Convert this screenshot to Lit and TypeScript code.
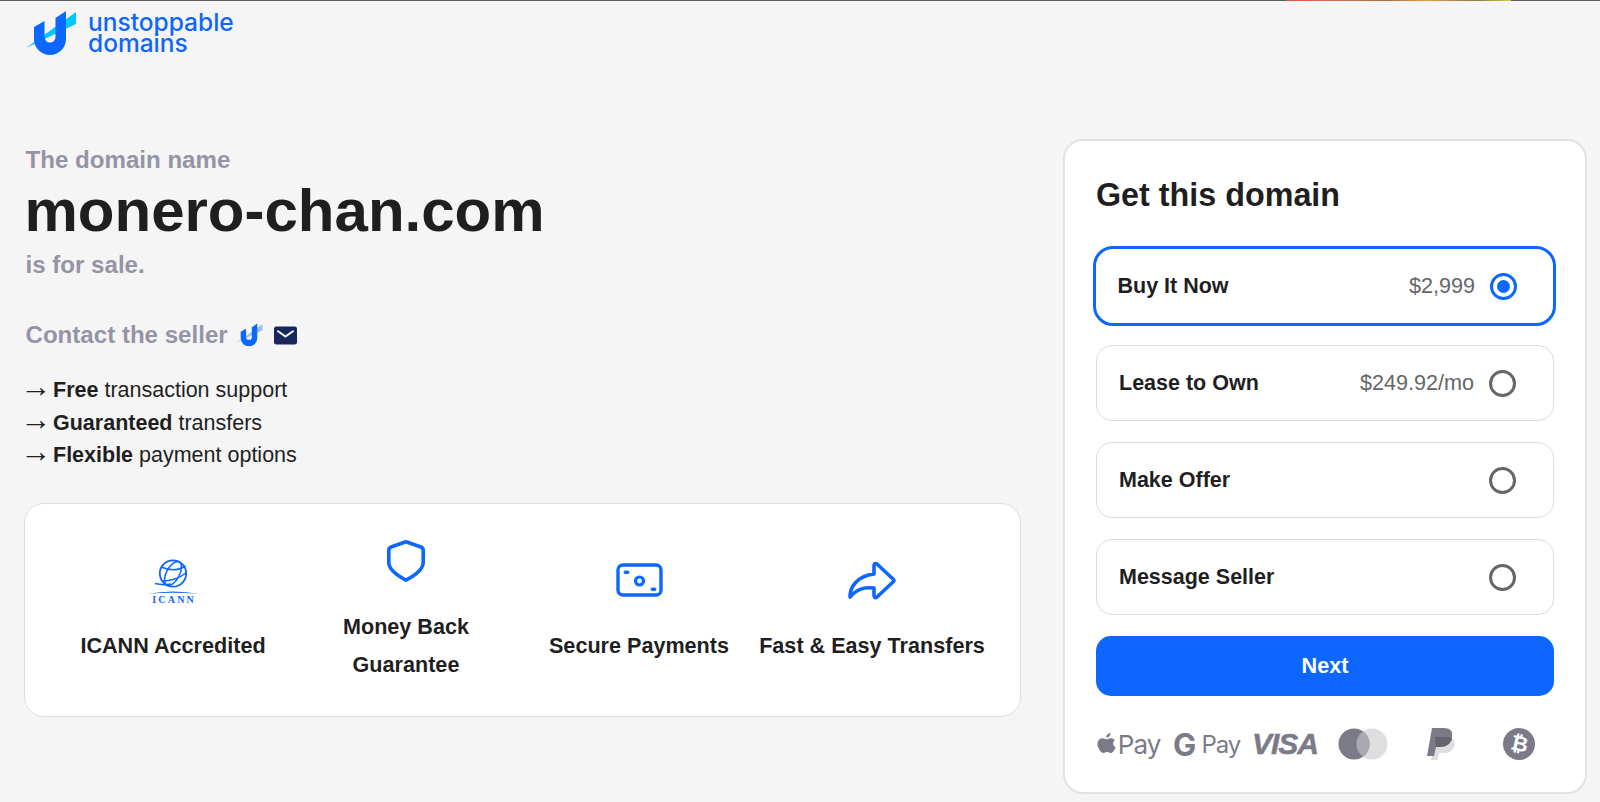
import {LitElement, html, css, svg} from 'lit';
import {customElement} from 'lit/decorators.js';

const logoMark = (width: number, streak: string) => html`
  <svg class="mark" width=${width} height=${(width * 46) / 52} viewBox="25 10 52 46">
    <path d="M26 48 L76 12 V24 Z" fill=${streak}></path>
    <path d="M34 27 L44.500 21 V37 A5.500 5.500 0 0 0 55.500 37 V18 L66 11 V39 A16 16 0 0 1 34 39 Z" fill="#0d67fe"></path>
  </svg>
`;

const shield = svg`<path d="M21 3.800 L36 9 Q38.200 10 38.200 12.500 V24.500 Q38.200 33 21 42.200 Q3.800 33 3.800 24.500 V12.500 Q3.800 10 6 9 Z" fill="none" stroke="#0d67fe" stroke-width="3.600" stroke-linejoin="round"></path>`;

const money = svg`
  <rect x="2" y="2" width="43" height="30" rx="5" fill="none" stroke="#0d67fe" stroke-width="3.400"></rect>
  <circle cx="23.500" cy="18" r="4" fill="none" stroke="#0d67fe" stroke-width="3.200"></circle>
  <rect x="8" y="8" width="5" height="2.600" rx="1.300" fill="#0d67fe" stroke="#0d67fe"></rect>
  <rect x="35" y="25" width="5" height="2.600" rx="1.300" fill="#0d67fe" stroke="#0d67fe"></rect>
`;

const share = svg`<path d="M2 36 C2 26 9 15 26 13 V5 Q26 1.500 29 3 L45 18 Q47 19.500 45 21 L29 36 Q26 38 26 34 V27 C16 26 9 28 2 36 Z" fill="none" stroke="#0d67fe" stroke-width="3.600" stroke-linejoin="round"></path>`;

const options = [
  {label: 'Buy It Now', price: '$2,999', selected: true},
  {label: 'Lease to Own', price: '$249.92/mo', selected: false},
  {label: 'Make Offer', price: '', selected: false},
  {label: 'Message Seller', price: '', selected: false},
];

const perks = [
  ['Free', 'transaction support'],
  ['Guaranteed', 'transfers'],
  ['Flexible', 'payment options'],
];

@customElement('app-root')
export class AppRoot extends LitElement {
  static override styles = css`
    :host {
      display: block;
      height: 802px;
      overflow: hidden;
      background: #f5f5f5;
      font-family: "Liberation Sans", Arial, sans-serif;
      color: #1f1f1f;
    }
    .page {
      position: relative;
      box-sizing: border-box;
      height: 802px;
      border-top: 1px solid #5c5c5c;
      padding: 0 13px 0 24px;
    }
    .stripe {
      position: absolute;
      top: -1px;
      left: 1286px;
      width: 225px;
      height: 1px;
      background: linear-gradient(90deg, #d8564a, #c9705a 25%, #a86b3c 45%, #e89a4a 62%, #8a7a4a 85%, #d8c850);
    }
    .brand {
      display: flex;
      align-items: center;
      gap: 11px;
      height: 46px;
      margin: 9px 0 0 1px;
    }
    .brand-name {
      font-family: Inter, sans-serif;
      font-size: 24.500px;
      font-weight: 500;
      line-height: 21px;
      color: #0d67fe;
    }
    .main {
      display: grid;
      grid-template-columns: 997px 524px;
      column-gap: 42px;
      margin-top: 83px;
    }
    .intro { padding: 7px 0 0 1.500px; }
    .muted {
      font-size: 24.100px;
      font-weight: 700;
      color: #9594a5;
      line-height: 28px;
    }
    .domain {
      margin: 1px 0 4px -1px;
      font-size: 60px;
      line-height: 72px;
      font-weight: 700;
      color: #1f1f1f;
    }
    .contact {
      display: flex;
      align-items: center;
      margin-top: 42px;
      height: 28px;
    }
    .contact .mark { margin: 0 11px 0 8px; }
    .perks {
      margin-top: 25px;
      font-size: 21.500px;
      line-height: 32.500px;
    }
    .arrow {
      display: inline-block;
      width: 32.500px;
      margin-left: -5px;
      font-size: 31px;
      line-height: 0;
    }
    .features {
      box-sizing: border-box;
      display: grid;
      grid-template-columns: repeat(4, 233px);
      justify-content: center;
      align-items: center;
      height: 214px;
      padding-top: 2px;
      margin-top: 31px;
      background: #fff;
      border: 1px solid #dedede;
      border-radius: 20px;
    }
    .feature {
      display: flex;
      flex-direction: column;
      align-items: center;
      text-align: center;
      font-size: 21.600px;
      font-weight: 700;
      line-height: 38px;
    }
    .feature .art {
      display: flex;
      align-items: center;
      justify-content: center;
      height: 48px;
      margin-bottom: 23px;
    }
    .feature.tall .art { margin-bottom: 23px; }
    .icann {
      display: flex;
      flex-direction: column;
      align-items: center;
      width: 52px;
      height: 48px;
    }
    .icann-word {
      font-family: "Liberation Serif", serif;
      font-size: 10px;
      font-weight: 700;
      letter-spacing: 2.200px;
      margin-right: -2.200px;
      line-height: 9px;
      color: #0d67fe;
    }
    .buy {
      box-sizing: border-box;
      height: 655px;
      padding: 0 31px;
      background: #fff;
      border: 2px solid #e2e2e2;
      border-radius: 20px;
    }
    .buy h2 {
      margin: 32px 0 31px;
      font-size: 32.300px;
      line-height: 44px;
      font-weight: 700;
      color: #1f1f1f;
    }
    .choices {
      display: flex;
      flex-direction: column;
      gap: 21px;
    }
    .choice {
      box-sizing: border-box;
      display: flex;
      align-items: center;
      height: 76px;
      padding: 0 37px 0 22px;
      border: 1px solid #dcdcdc;
      border-radius: 16px;
      font-size: 21.500px;
      font-weight: 700;
    }
    .choice.on {
      height: 80px;
      margin: -2px -2px -2px -3px;
      padding: 0 36px 0 21.500px;
      border: 3px solid #0d67fe;
      border-radius: 20px;
    }
    .price {
      margin-left: auto;
      margin-right: 15px;
      font-size: 21.600px;
      font-weight: 400;
      color: #666;
    }
    .radio {
      box-sizing: border-box;
      display: flex;
      align-items: center;
      justify-content: center;
      flex: none;
      width: 27px;
      height: 27px;
      margin-left: auto;
      border: 3px solid #666;
      border-radius: 50%;
    }
    .price + .radio { margin-left: 0; }
    .on .radio { border-color: #0d67fe; }
    .on .radio::after {
      content: "";
      width: 13px;
      height: 13px;
      border-radius: 50%;
      background: #0d67fe;
    }
    .next {
      display: block;
      width: 100%;
      height: 60px;
      margin-top: 21px;
      border: 0;
      border-radius: 15px;
      background: #0d67fe;
      color: #fff;
      font: 700 21.600px "Liberation Sans", Arial, sans-serif;
    }
    .pay {
      display: grid;
      grid-template-columns: repeat(6, 78.200px);
      justify-content: center;
      justify-items: center;
      align-items: center;
      height: 46px;
      margin: 25px -1px 0 -3px;
      color: #7b7b88;
    }
    .wallet {
      display: flex;
      align-items: center;
      gap: 2px;
      font-family: Inter, sans-serif;
      font-size: 26px;
      letter-spacing: -1px;
      white-space: nowrap;
    }
    .wallet.google { font-size: 24px; gap: 5px; }
    .g {
      font-weight: 700;
      font-size: 31px;
      letter-spacing: 0;
    }
    .visa {
      font-size: 30px;
      font-weight: 700;
      font-style: italic;
      letter-spacing: -1px;
      -webkit-text-stroke: 0.500px #7b7b88;
    }
    .coin {
      display: flex;
      align-items: center;
      justify-content: center;
      width: 32px;
      height: 32px;
      border-radius: 50%;
      background: #7b7b88;
      color: #fff;
      font-family: "DejaVu Sans", sans-serif;
      font-size: 21px;
      font-weight: 700;
    }
    .coin span { transform: rotate(12deg); }
  `;

  override render() {
    return html`
      <div class="page">
        <div class="stripe"></div>
        <header class="brand">
          ${logoMark(52, '#00c9ff')}
          <div class="brand-name">unstoppable<br />domains</div>
        </header>
        <div class="main">
          <section>
            <div class="intro">
              <div class="muted">The domain name</div>
              <div class="domain">monero-chan.com</div>
              <div class="muted">is for sale.</div>
              <div class="muted contact">
                Contact the seller ${logoMark(27, '#9cc0f5')}
                <svg width="23" height="19" viewBox="0 0 24 19">
                  <rect width="24" height="19" rx="2.500" fill="#17275c"></rect>
                  <path d="M3.500 4.500 L12 10.500 L20.500 4.500" fill="none" stroke="#fff" stroke-width="2"></path>
                </svg>
              </div>
              <div class="perks">
                ${perks.map(
                  ([strong, rest]) => html`<div><span class="arrow">→</span><b>${strong}</b> ${rest}</div>`
                )}
              </div>
            </div>
            <div class="features">
              <div class="feature">
                <div class="art">
                  <div class="icann">
                    <svg width="52" height="39" viewBox="0 0 52 39">
                      <g fill="none" stroke="#0d67fe">
                        <circle cx="26" cy="17.500" r="13.200" stroke-width="1.800"></circle>
                        <ellipse cx="26" cy="17.500" rx="6.500" ry="13.200" transform="rotate(28 26 17.500)" stroke-width="1.500"></ellipse>
                        <path d="M14.500 11 Q27 17 38.500 10 M15 25 Q29 25 39.500 16.500 M8 27.500 Q16 29.500 24 28" stroke-width="1.500"></path>
                      </g>
                      <path d="M0 38 Q26 33 52 38 Q26 35.500 0 38 Z" fill="#0d67fe"></path>
                    </svg>
                    <div class="icann-word">ICANN</div>
                  </div>
                </div>
                ICANN Accredited
              </div>
              <div class="feature tall">
                <div class="art"><svg width="42" height="46" viewBox="0 0 42 46">${shield}</svg></div>
                Money Back<br />Guarantee
              </div>
              <div class="feature">
                <div class="art"><svg width="47" height="34" viewBox="0 0 47 34">${money}</svg></div>
                Secure Payments
              </div>
              <div class="feature">
                <div class="art"><svg width="48" height="39" viewBox="0 0 48 39">${share}</svg></div>
                Fast &amp; Easy Transfers
              </div>
            </div>
          </section>
          <aside class="buy">
            <h2>Get this domain</h2>
            <div class="choices">
              ${options.map(
                (o) => html`
                  <div class="choice ${o.selected ? 'on' : ''}">
                    ${o.label}
                    ${o.price ? html`<span class="price">${o.price}</span>` : ''}
                    <span class="radio"></span>
                  </div>
                `
              )}
            </div>
            <button class="next">Next</button>
            <div class="pay">
              <div class="wallet">
                <svg width="19" height="24" viewBox="0 0 19 24">
                  <path fill="#7b7b88" d="M13.500 1 C13.600 3.500 11.500 5.800 9.300 5.700 C9 3.400 11.200 1.200 13.500 1 Z M9.500 7.300 C10.600 7.300 12 6.100 14 6.200 C15.500 6.300 17 7 17.900 8.300 C15.300 10 15.700 14 18.600 15.200 C17.800 17.500 15.800 21 13.900 21 C12.500 21 11.900 20.100 10.200 20.100 C8.500 20.100 7.800 21 6.500 21 C4 21 0.500 16 0.500 12 C0.500 8.500 2.800 6.300 5.300 6.300 C7 6.300 8.400 7.300 9.500 7.300 Z"></path>
                </svg>
                Pay
              </div>
              <div class="wallet google"><span class="g">G</span>Pay</div>
              <div class="visa">VISA</div>
              <svg width="50" height="32" viewBox="0 0 50 32">
                <circle cx="34" cy="16" r="15.500" fill="#dedee0"></circle>
                <circle cx="16" cy="16" r="15.500" fill="#7b7b88"></circle>
                <path d="M25 3.300 A15.500 15.500 0 0 1 25 28.700 A15.500 15.500 0 0 1 25 3.300 Z" fill="#a9a9b1"></path>
              </svg>
              <svg width="28" height="33" viewBox="0 0 28 33">
                <path d="M8 9 H19 C27 9 29 14 27 19 C25 24 21 25 16 25 H12 L10.500 32 H4 Z" fill="#dedee0"></path>
                <path d="M5 0 H17 C24 0 26 4 25 9 C24 15 20 19 13 19 H9 L7 28 H0 Z" fill="#7b7b88"></path>
                <path d="M8 9 H19 C22 9 24 9.500 25 10.500 C24 15 20 19 13 19 H9 Z" fill="#65656f"></path>
              </svg>
              <div class="coin"><span>₿</span></div>
            </div>
          </aside>
        </div>
      </div>
    `;
  }
}
